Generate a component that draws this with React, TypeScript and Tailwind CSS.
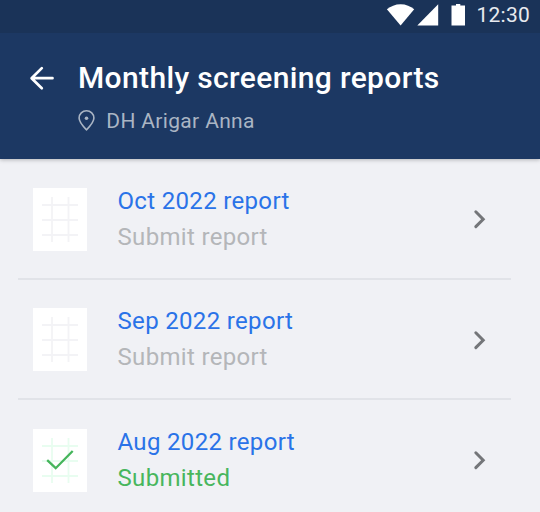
type Report = { month: string; submitted: boolean };

const reports: Report[] = [
  { month: "Oct 2022 report", submitted: false },
  { month: "Sep 2022 report", submitted: false },
  { month: "Aug 2022 report", submitted: true },
];

function StatusBar() {
  return (
    <div className="flex h-[33px] items-start justify-end bg-[#1a3358] pr-[10px]">
      <svg className="h-[33px] w-[90px]" viewBox="0 0 90 33" fill="#fff">
        <path d="M6.9 9.3C10.6 6.2 15.3 4.2 20.6 4.2S30.600 6.200 34.200 9.300L20.600 25.600Z" />
        <path d="M58.200 4.200V25.500H37.300Z" />
        <path d="M71.500 5.500H76V4H80.300V5.500H85V25.600H71.500Z" />
      </svg>
      <span className="ml-[6px] pt-[3px] text-[21px] leading-[25px] tracking-[0.25px] text-[#e8ebef]">12:30</span>
    </div>
  );
}

function Header() {
  return (
    <header className="relative z-10 h-[159px] bg-[#1c3863] shadow-[0_1px_4px_rgba(0,0,0,0.25)]">
      <StatusBar />
      <div className="flex pt-[27px] pl-[29px]">
        <svg className="mt-[6px] h-[25px] w-[25px]" viewBox="0 0 25 25" fill="none" stroke="#fff" strokeWidth="2.7" strokeLinecap="round" strokeLinejoin="round">
          <path d="M23.500 12.200H2.800M12.800 2.100L2.600 12.200L12.800 22.200" />
        </svg>
        <div className="ml-[24px]">
          <h1 className="text-[30px] leading-[36px] font-medium tracking-[0.36px] whitespace-nowrap text-white">Monthly screening reports</h1>
          <div className="mt-[12px] flex items-start">
            <svg className="mt-[1px] h-[22px] w-[17px]" viewBox="0 0 17 22" fill="none">
              <path d="M8.500 20.800C5 17.300 1.100 13.500 1.100 9.100C1.100 5 4.400 1.800 8.500 1.800S15.900 5 15.900 9.100C15.900 13.500 12 17.300 8.500 20.800Z" stroke="#aab5c4" strokeWidth="1.600" />
              <circle cx="8.500" cy="9.200" r="1.800" fill="#aab5c4" />
            </svg>
            <span className="ml-[11.300px] text-[21px] leading-[26px] tracking-[0.34px] whitespace-nowrap text-[#aab5c4]">DH Arigar Anna</span>
          </div>
        </div>
      </div>
    </header>
  );
}

function ReportIcon({ submitted }: { submitted: boolean }) {
  return (
    <svg className="h-[63px] w-[54px] shrink-0 bg-white" viewBox="0 0 54 63" fill="none">
      <path d="M19 9V54M35.500 9V54M9 17H45M9 32H45M9 47H45" stroke={submitted ? "#e8fdf0" : "#f3f3f6"} strokeWidth="1.800" />
      {submitted && <path d="M14.200 31.200L22.700 39.200L39.700 22" stroke="#45b55b" strokeWidth="2.300" />}
    </svg>
  );
}

function ReportRow({ month, submitted }: Report) {
  return (
    <li className="ml-[18px] flex h-[120.400px] w-[492.500px] border-b-2 border-[#e1e3e8] pt-[28.400px] pl-[15px]">
      <ReportIcon submitted={submitted} />
      <div className="ml-[30.500px] -mt-[5px] text-[24px] leading-[36px] tracking-[0.33px] whitespace-nowrap">
        <div className="text-[#2a73e8]">{month}</div>
        <div className={submitted ? "text-[#48b65d]" : "text-[#b4b6b9]"}>{submitted ? "Submitted" : "Submit report"}</div>
      </div>
      <svg className="mt-[21.300px] mr-[23.500px] ml-auto h-[20px] w-[14px]" viewBox="0 0 14 20" fill="none" stroke="#747679" strokeWidth="3" strokeLinecap="round">
        <path d="M2.800 2.800L10.200 10.200L2.800 17.600" />
      </svg>
    </li>
  );
}

export default function App() {
  return (
    <div className="h-[512px] w-[540px] overflow-hidden bg-[#f0f1f5] font-[Roboto,sans-serif]">
      <Header />
      <ul className="pt-[0.600px]">
        {reports.map((report) => (
          <ReportRow key={report.month} {...report} />
        ))}
      </ul>
    </div>
  );
}
